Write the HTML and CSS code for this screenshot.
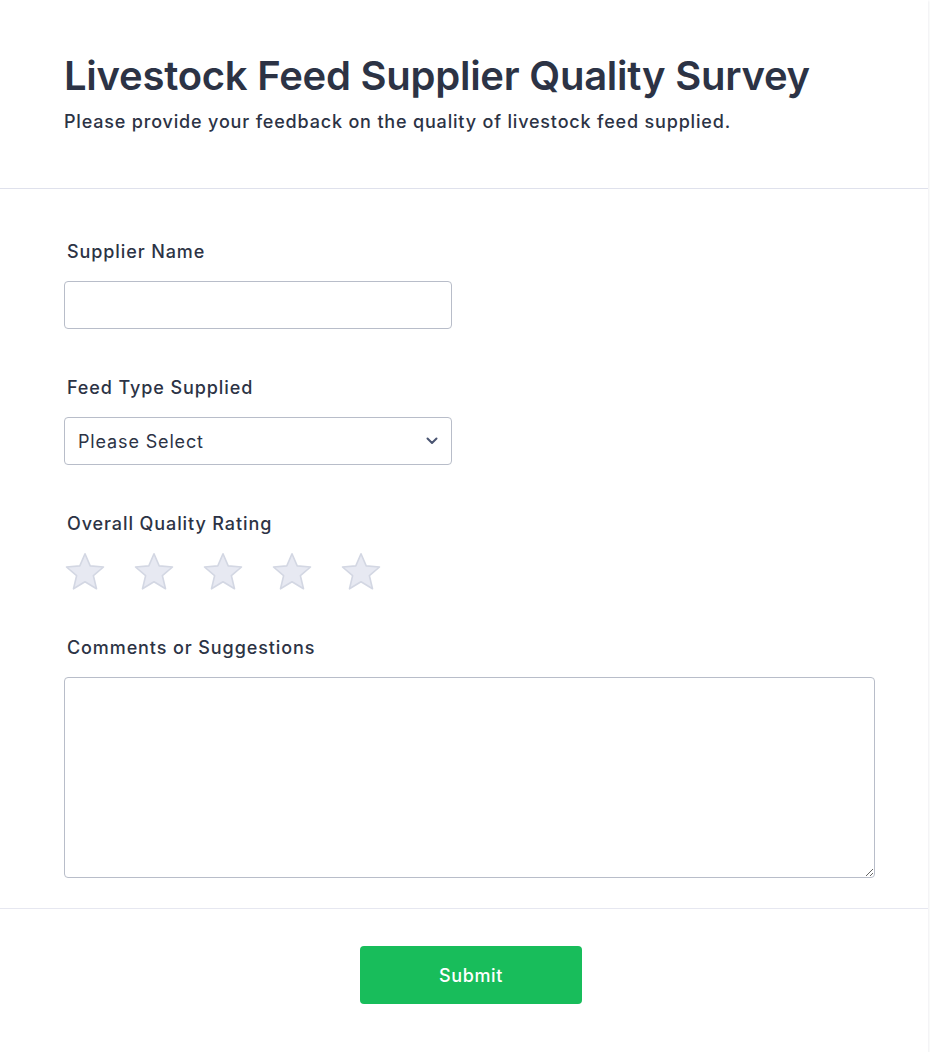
FILE: index.html
```html
<!DOCTYPE html>
<html lang="en">
<head>
<meta charset="utf-8">
<title>Livestock Feed Supplier Quality Survey</title>
<link rel="stylesheet" href="styles.css">
</head>
<body>
<div class="card">
  <header class="header">
    <h1 class="title">Livestock Feed Supplier Quality Survey</h1>
    <p class="subtitle">Please provide your feedback on the quality of livestock feed supplied.</p>
  </header>
  <form class="form">
    <div class="field">
      <label class="label" for="supplier">Supplier Name</label>
      <input class="input" id="supplier" type="text">
    </div>
    <div class="field">
      <label class="label" for="feed">Feed Type Supplied</label>
      <div class="select">
        <span>Please Select</span>
        <svg class="chevron" width="12" height="8" viewBox="0 0 12 8"><path d="M1.5 1.5 L6 6 L10.5 1.5" fill="none" stroke="#4a5572" stroke-width="2" stroke-linecap="round" stroke-linejoin="round"/></svg>
      </div>
    </div>
    <div class="field">
      <span class="label">Overall Quality Rating</span>
      <div class="stars">
        <svg class="star" viewBox="0 0 40 40"><path d="M20 1.8 L25.2 13.9 L38.5 15 L28.4 23.7 L31.5 36.8 L20 29.8 L8.5 36.8 L11.6 23.7 L1.5 15 L14.8 13.9 Z"/></svg>
        <svg class="star" viewBox="0 0 40 40"><path d="M20 1.8 L25.2 13.9 L38.5 15 L28.4 23.7 L31.5 36.8 L20 29.8 L8.5 36.8 L11.6 23.7 L1.5 15 L14.8 13.9 Z"/></svg>
        <svg class="star" viewBox="0 0 40 40"><path d="M20 1.8 L25.2 13.9 L38.5 15 L28.4 23.7 L31.5 36.8 L20 29.8 L8.5 36.8 L11.6 23.7 L1.5 15 L14.8 13.9 Z"/></svg>
        <svg class="star" viewBox="0 0 40 40"><path d="M20 1.8 L25.2 13.9 L38.5 15 L28.4 23.7 L31.5 36.8 L20 29.8 L8.5 36.8 L11.6 23.7 L1.5 15 L14.8 13.9 Z"/></svg>
        <svg class="star" viewBox="0 0 40 40"><path d="M20 1.8 L25.2 13.9 L38.5 15 L28.4 23.7 L31.5 36.8 L20 29.8 L8.5 36.8 L11.6 23.7 L1.5 15 L14.8 13.9 Z"/></svg>
      </div>
    </div>
    <div class="field">
      <label class="label" for="comments">Comments or Suggestions</label>
      <textarea class="textarea" id="comments"></textarea>
    </div>
  </form>
  <footer class="footer">
    <button class="submit" type="button">Submit</button>
  </footer>
</div>
</body>
</html>
```
FILE: styles.css
```css
* { box-sizing: border-box; }
html, body { margin: 0; padding: 0; background: #ffffff; }
body {
  font-family: Inter, "Noto Sans", sans-serif;
  color: #2c3345;
}
.card {
  width: 928px;
  background: #fff;
  box-shadow: 1px 1px 2px rgba(40, 50, 80, 0.08);
}
.header {
  padding: 52px 64px 54px;
  border-bottom: 1px solid #dfe1ec;
}
.title {
  margin: 0;
  font-size: 40px;
  line-height: 48px;
  font-weight: 600;
  letter-spacing: -0.25px;
}
.subtitle {
  margin: 9px 0 0;
  font-size: 18px;
  line-height: 25px;
  font-weight: 500;
  letter-spacing: 0.82px;
}
.form {
  display: flex;
  flex-direction: column;
  gap: 47px;
  padding: 51px 53px 30px 64px;
  border-bottom: 1px solid #e6e7f0;
}
.field {
  display: flex;
  flex-direction: column;
  align-items: flex-start;
  gap: 17px;
}
.label {
  padding-left: 3px;
  font-size: 18px;
  line-height: 24px;
  font-weight: 500;
  letter-spacing: 0.9px;
}
.input, .select {
  width: 388px;
  height: 48px;
  border: 1px solid #b8bdc9;
  border-radius: 4px;
  background: #fff;
  font: inherit;
}
.select {
  display: flex;
  align-items: center;
  justify-content: space-between;
  padding: 0 13px 0 13px;
  font-size: 18px;
  letter-spacing: 0.85px;
  color: #2c3345;
}
.chevron { display: block; }
.stars {
  display: flex;
  gap: 29px;
  margin: -1px 0 -3px 1px;
}
.star {
  width: 40px;
  height: 40px;
  display: block;
}
.star path {
  fill: #e7e9f2;
  stroke: #d3d7e3;
  stroke-width: 1.6;
  stroke-linejoin: round;
}
.textarea {
  width: 811px;
  height: 201px;
  border: 1px solid #b8bdc9;
  border-radius: 4px;
  font: inherit;
  resize: vertical;
}
.footer {
  display: flex;
  justify-content: center;
  padding: 37px 0 48px 14px;
}
.submit {
  width: 222px;
  height: 58px;
  border: none;
  border-radius: 4px;
  background: #18bd5b;
  color: #fff;
  font-family: Inter, "Noto Sans", sans-serif;
  font-size: 18px;
  font-weight: 500;
  letter-spacing: 0.6px;
}
```
